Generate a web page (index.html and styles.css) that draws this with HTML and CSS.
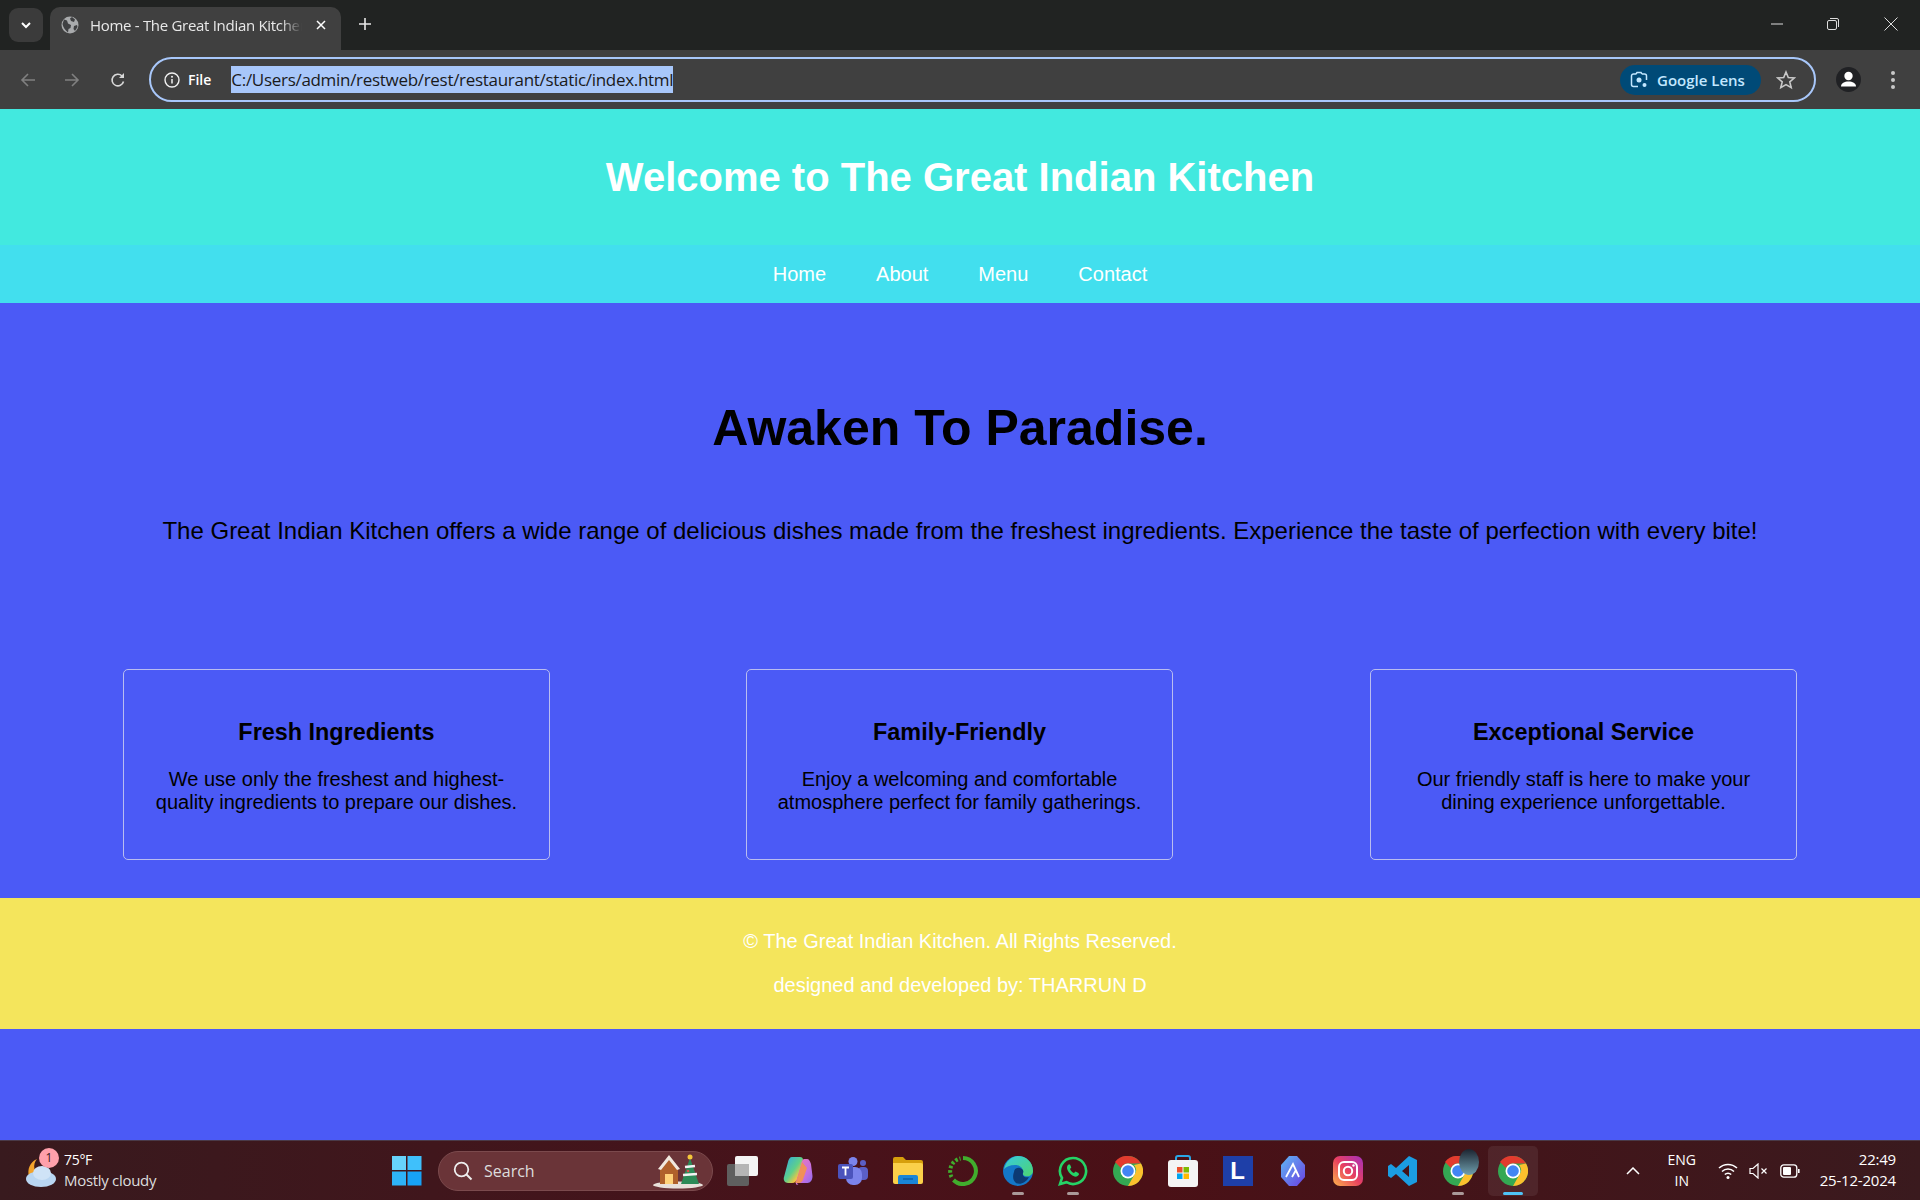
FILE: index.html
```html
<!DOCTYPE html>
<html lang="en">
<head>
  <meta charset="UTF-8" />
  <title>Home - The Great Indian Kitchen</title>
  <link rel="stylesheet" href="styles.css">
</head>
<body>
  <!-- Browser tabs -->
  <div class="tabstrip">
    <div class="tab-search">
      <svg width="12" height="12" viewBox="0 0 12 12"><path d="M2 4l4 4 4-4" fill="none" stroke="#fff" stroke-width="2"/></svg>
    </div>
    <div class="tab">
      <svg class="tab-globe" width="18" height="18" viewBox="0 0 18 18"><circle cx="9" cy="9" r="8.5" fill="#a9abad"/><path d="M3 3.500l3 1 1 3 3 1.500-.5 3-2 1-.5 3.500C4 14 2 11 1.500 8z M11 1l3 2.500-1 2.500-3-1-1-2.500z M13 10l3-1 .5 2-2.500 4-1.500-2z" fill="#3f4042"/></svg>
      <span class="tab-title">Home - The Great Indian Kitchen</span>
      <svg class="tab-close" width="10" height="10" viewBox="0 0 10 10"><path d="M1 1l8 8M9 1L1 9" stroke="#fff" stroke-width="1.500"/></svg>
    </div>
    <svg class="new-tab" width="14" height="14" viewBox="0 0 14 14"><path d="M7 1v12M1 7h12" stroke="#e8e8e8" stroke-width="1.600"/></svg>
    <div class="window-controls">
      <svg width="14" height="14" viewBox="0 0 14 14"><path d="M1 7h12" stroke="#ddd"/></svg>
      <svg width="14" height="14" viewBox="0 0 14 14"><rect x="1.500" y="3.500" width="9" height="9" rx="1.500" fill="none" stroke="#ddd"/><path d="M4 1.500h7a1.500 1.500 0 0 1 1.500 1.500v7" fill="none" stroke="#ddd"/></svg>
      <svg width="14" height="14" viewBox="0 0 14 14"><path d="M.5.5l13 13M13.500.5l-13 13" stroke="#ddd"/></svg>
    </div>
  </div>

  <!-- Address bar -->
  <div class="toolbar">
    <svg class="nav-btn" width="16" height="16" viewBox="0 0 16 16"><path d="M15 8H2M8 2L2 8l6 6" fill="none" stroke="#808080" stroke-width="1.600"/></svg>
    <svg class="nav-btn" width="16" height="16" viewBox="0 0 16 16"><path d="M1 8h13M8 2l6 6-6 6" fill="none" stroke="#808080" stroke-width="1.600"/></svg>
    <svg class="nav-btn" width="16" height="16" viewBox="0 0 16 16"><path d="M13.500 9.500A5.800 5.800 0 1 1 12 4" fill="none" stroke="#d8d8d8" stroke-width="1.600"/><path d="M14 1v5H9z" fill="#d8d8d8"/></svg>
    <div class="omnibox">
      <svg width="16" height="16" viewBox="0 0 16 16"><circle cx="8" cy="8" r="7" fill="none" stroke="#f0f0f0" stroke-width="1.400"/><path d="M8 7v4.500" stroke="#f0f0f0" stroke-width="1.500"/><circle cx="8" cy="4.800" r="1" fill="#f0f0f0"/></svg>
      <span class="chip-file">File</span>
      <span class="url">C:/Users/admin/restweb/rest/restaurant/static/index.html</span>
      <div class="lens">
        <svg width="18" height="18" viewBox="0 0 18 18"><path d="M6 3H3.500A2 2 0 0 0 1.500 5v8.500a2 2 0 0 0 2 2H8M12 3h2.500a2 2 0 0 1 2 2v4M6 3l1-1.500h4L12 3" fill="none" stroke="#c2e7ff" stroke-width="1.500"/><circle cx="9" cy="9" r="2.500" fill="#c2e7ff"/><circle cx="14.500" cy="14" r="2" fill="#c2e7ff"/></svg>
        <span>Google Lens</span>
      </div>
      <svg class="star" width="20" height="20" viewBox="0 0 20 20"><path d="M10 2l2.300 5.500 6 .5-4.500 3.900 1.400 5.800L10 14.600l-5.200 3.100 1.400-5.800L1.700 8l6-.5z" fill="none" stroke="#c8c8c8" stroke-width="1.600"/></svg>
    </div>
    <svg class="avatar" width="25" height="25" viewBox="0 0 25 25"><circle cx="12.500" cy="12.500" r="12.500" fill="#202124"/><circle cx="12.500" cy="9" r="4.200" fill="#fff"/><path d="M5 19.500c0-3.500 3.500-5 7.500-5s7.500 1.500 7.500 5z" fill="#fff"/></svg>
    <svg class="menu-dots" width="4" height="18" viewBox="0 0 4 18"><circle cx="2" cy="2" r="2" fill="#c8c8c8"/><circle cx="2" cy="9" r="2" fill="#c8c8c8"/><circle cx="2" cy="16" r="2" fill="#c8c8c8"/></svg>
  </div>

  <!-- The page itself -->
  <div class="site">
    <header class="site-header">
      <h1>Welcome to The Great Indian Kitchen</h1>
    </header>
    <nav class="site-nav">
      <a href="#">Home</a>
      <a href="#">About</a>
      <a href="#">Menu</a>
      <a href="#">Contact</a>
    </nav>
    <section class="hero">
      <h2>Awaken To Paradise.</h2>
      <p>The Great Indian Kitchen offers a wide range of delicious dishes made from the freshest ingredients. Experience the taste of perfection with every bite!</p>
    </section>
    <section class="features">
      <div class="feature">
        <h3>Fresh Ingredients</h3>
        <p>We use only the freshest and highest-quality ingredients to prepare our dishes.</p>
      </div>
      <div class="feature">
        <h3>Family-Friendly</h3>
        <p>Enjoy a welcoming and comfortable atmosphere perfect for family gatherings.</p>
      </div>
      <div class="feature">
        <h3>Exceptional Service</h3>
        <p>Our friendly staff is here to make your dining experience unforgettable.</p>
      </div>
    </section>
    <footer class="site-footer">
      <p>&copy; The Great Indian Kitchen. All Rights Reserved.</p>
      <p>designed and developed by: THARRUN D</p>
    </footer>
  </div>

  <!-- Windows taskbar -->
  <div class="taskbar">
    <div class="weather">
      <svg width="34" height="36" viewBox="0 0 34 36"><path d="M13 6a11 11 0 0 0 3 17L5 24C3 16 6 9 13 6z" fill="#f3a32b"/><ellipse cx="17" cy="26" rx="15" ry="8" fill="#b9d6f2"/><ellipse cx="18" cy="20" rx="9" ry="7" fill="#cfe3f7"/></svg>
      <span class="weather-badge">1</span>
      <div class="weather-text">
        <div class="weather-temp">75&deg;F</div>
        <div>Mostly cloudy</div>
      </div>
    </div>
    <svg class="start" width="30" height="30" viewBox="0 0 30 30"><rect width="14" height="14" fill="#67d3fb"/><rect x="15.500" width="14" height="14" fill="#3fc0fb"/><rect y="15.500" width="14" height="14" fill="#2eb3f8"/><rect x="15.500" y="15.500" width="14" height="14" fill="#17a2f6"/></svg>
    <div class="search-pill">
      <svg width="22" height="22" viewBox="0 0 22 22"><circle cx="9.500" cy="9.500" r="6.800" fill="none" stroke="#eee" stroke-width="1.800"/><path d="M14.500 14.500l5 5" stroke="#eee" stroke-width="2"/></svg>
      <span>Search</span>
      <svg class="search-art" width="52" height="36" viewBox="0 0 52 36"><ellipse cx="26" cy="32" rx="25" ry="3.500" fill="#e8e0da"/><path d="M8 15L17 3l9 12v16H8z" fill="#b0612b"/><path d="M6 16L17 2l11 14-3 1L17 7 9 17z" fill="#f1e9df"/><rect x="13" y="21" width="8" height="10" fill="#ffd27a"/><path d="M38 5l9 26H29z" fill="#2c8a57"/><path d="M33 14l10-1M31 22l14-1" stroke="#f3f3f3" stroke-width="2.500"/><circle cx="38" cy="4" r="2.500" fill="#f5c73a"/><circle cx="36" cy="18" r="1.300" fill="#e24a4a"/></svg>
    </div>
    <div class="pinned">
      <div class="pin"><svg width="32" height="30" viewBox="0 0 32 30"><rect x="0" y="8" width="22" height="22" rx="2" fill="#5f5f5f"/><rect x="8" y="0" width="23" height="20" rx="2" fill="#f4f4f4"/><rect x="8" y="8" width="14" height="12" fill="#b5b5b5"/></svg></div>
      <div class="pin"><svg width="30" height="30" viewBox="0 0 30 30"><defs><linearGradient id="cop-a" x1="0" y1="0" x2="1" y2="1"><stop offset="0" stop-color="#2fa8e8"/><stop offset=".5" stop-color="#5fd08a"/><stop offset=".75" stop-color="#f5c542"/><stop offset="1" stop-color="#f0656a"/></linearGradient><linearGradient id="cop-b" x1="0" y1="0" x2="1" y2="1"><stop offset="0" stop-color="#f07ab0"/><stop offset=".6" stop-color="#c56fe0"/><stop offset="1" stop-color="#8a6cf0"/></linearGradient></defs><path d="M9 1h8c2 0 3 1 3 3l-5 17c-1 4-3 6-6 6H5c-3 0-5-3-4-6L5 6c.6-3 2-5 4-5z" fill="url(#cop-a)"/><path d="M21 3h3c2 0 3 2 4 5l1.500 12c0 4-2 7-5 7h-9c-2 0-2 1 0 2h-1c-2 0-2-3-1-5l4-13c.6-4 2-8 3.500-8z" fill="url(#cop-b)"/><path d="M19 6l-5 17c-.5 2-1 3-2 4h5c2-1 3-3 3.500-5L24 12z" fill="#f0905a"/></svg></div>
      <div class="pin"><svg width="30" height="28" viewBox="0 0 30 28"><circle cx="25" cy="6" r="3" fill="#5b5fc7"/><rect x="20" y="10" width="10" height="13" rx="4" fill="#5b5fc7"/><circle cx="15" cy="4.500" r="4.500" fill="#7b83eb"/><rect x="8" y="10" width="16" height="18" rx="7" fill="#7b83eb"/><rect x="0" y="7" width="15" height="15" rx="2" fill="#4b53bc"/><path d="M4 10.500h7M7.500 10.500v8" stroke="#fff" stroke-width="1.800"/></svg></div>
      <div class="pin"><svg width="30" height="27" viewBox="0 0 30 27"><path d="M0 2a2 2 0 0 1 2-2h8l3 3h15a2 2 0 0 1 2 2v4H0z" fill="#d79f0c"/><path d="M0 6h28a2 2 0 0 1 2 2v17a2 2 0 0 1-2 2H2a2 2 0 0 1-2-2z" fill="#fbd04a"/><path d="M5 20a2 2 0 0 1 2-2h16a2 2 0 0 1 2 2v7H5z" fill="#1a86d8"/><path d="M10 22h10" stroke="#0e5fa8" stroke-width="1.500"/></svg></div>
      <div class="pin"><svg width="30" height="30" viewBox="0 0 30 30"><path d="M15 2a13 13 0 1 1-9.500 22" fill="none" stroke="#41ad2d" stroke-width="4"/><path d="M3.500 21a13 13 0 0 1 9-18.500" fill="none" stroke="#41ad2d" stroke-width="4" stroke-dasharray="2.500 2"/></svg></div>
      <div class="pin pin-open"><svg width="30" height="30" viewBox="0 0 30 30"><defs><linearGradient id="edge" x1="0" y1="0" x2="1" y2="1"><stop offset="0" stop-color="#38c9e0"/><stop offset="1" stop-color="#4ed56f"/></linearGradient></defs><circle cx="15" cy="15" r="15" fill="#1477c8"/><path d="M1 13C3 5 9 0 15 0c8 0 15 6 15 15 0 4-4 6-8 5-3-1-2-3-2-4 0-5-4-7-8-7-5 0-9 2-11 4z" fill="url(#edge)"/><path d="M11 16c0-3 3-5 6-4 3 1 4 3 3 5-1 3 2 5 6 4-3 6-9 8-13 6-4-3-3-8-2-11z" fill="#0c3a73"/></svg></div>
      <div class="pin pin-open"><svg width="30" height="30" viewBox="0 0 30 30"><path d="M15 2a13 13 0 0 0-11 20L2 28l6.500-1.800A13 13 0 1 0 15 2z" fill="none" stroke="#25d366" stroke-width="2.600"/><path d="M10.500 8.500c-1.500 1-2 3-1 5.500 1.500 3 4 5.500 7 6.500 2 .5 3.700-.5 4.500-2l-.5-1.500-3-1.500-1.500 1.500c-1.500-.5-3.500-2.500-4-4l1.300-1.500-1.300-3z" fill="#25d366"/></svg></div>
      <div class="pin"><svg width="30" height="30" viewBox="0 0 30 30"><use href="#chrome-logo"/></svg></div>
      <div class="pin"><svg width="30" height="32" viewBox="0 0 30 32"><path d="M8 6V3a2 2 0 0 1 2-2h10a2 2 0 0 1 2 2v3" fill="none" stroke="#2aa7e6" stroke-width="2"/><rect x="0" y="5" width="30" height="27" rx="3" fill="#f4f4f4"/><rect x="9" y="12" width="5.500" height="5.500" fill="#ea4f2b"/><rect x="15.500" y="12" width="5.500" height="5.500" fill="#7fba00"/><rect x="9" y="18.500" width="5.500" height="5.500" fill="#00a4ef"/><rect x="15.500" y="18.500" width="5.500" height="5.500" fill="#ffb900"/></svg></div>
      <div class="pin"><span class="pin-l">L</span></div>
      <div class="pin"><svg width="28" height="32" viewBox="0 0 28 32"><defs><linearGradient id="aero" x1="0" y1="0" x2="1" y2="1"><stop offset="0" stop-color="#5fb8f5"/><stop offset="1" stop-color="#6a3fe0"/></linearGradient></defs><path d="M10 1h8l8 9v12l-8 9h-8L2 22V10z" fill="url(#aero)"/><path d="M7 22L14 9l6 13M13 22l4-7" fill="none" stroke="#fff" stroke-width="1.800"/></svg></div>
      <div class="pin"><svg width="30" height="30" viewBox="0 0 30 30"><defs><linearGradient id="insta" x1="0" y1="1" x2="1" y2="0"><stop offset="0" stop-color="#fdb44b"/><stop offset=".5" stop-color="#e8405f"/><stop offset="1" stop-color="#a42fc0"/></linearGradient></defs><rect width="30" height="30" rx="7" fill="url(#insta)"/><rect x="6" y="6" width="18" height="18" rx="5" fill="none" stroke="#fff" stroke-width="2"/><circle cx="15" cy="15" r="4.200" fill="none" stroke="#fff" stroke-width="2"/><circle cx="20.500" cy="9.500" r="1.200" fill="#fff"/></svg></div>
      <div class="pin"><svg width="30" height="30" viewBox="0 0 30 30"><path d="M21 0l8 4v22l-8 4-13-12-5 4-3-2V10l3-2 5 4zM21 9l-7 6 7 6z" fill="#1b9de2"/></svg></div>
      <div class="pin pin-open"><svg width="30" height="30" viewBox="0 0 30 30"><use href="#chrome-logo"/></svg><span class="profile-thumb"></span></div>
      <div class="pin pin-active"><svg width="30" height="30" viewBox="0 0 30 30"><g id="chrome-logo"><circle cx="15" cy="15" r="15" fill="#34a853"/><path d="M15 0a15 15 0 0 1 13 7.500H15a7.500 7.500 0 0 0-7 4.500L2 6a15 15 0 0 1 13-6z" fill="#e33b2e"/><path d="M28 7.500A15 15 0 0 1 15 30l6.500-11.500A7.500 7.500 0 0 0 21 9z" fill="#fbc02d"/><circle cx="15" cy="15" r="7.500" fill="#fff"/><circle cx="15" cy="15" r="5.800" fill="#4285f4"/></g></svg></div>
    </div>
    <div class="tray">
      <svg class="tray-chevron" width="14" height="8" viewBox="0 0 14 8"><path d="M1 7l6-6 6 6" fill="none" stroke="#fff" stroke-width="1.500"/></svg>
      <div class="lang">ENG<br>IN</div>
      <svg class="tray-icon" width="20" height="18" viewBox="0 0 20 18"><path d="M1 6a13 13 0 0 1 18 0M4 9.500a8.500 8.500 0 0 1 12 0M6.800 12.500a4.500 4.500 0 0 1 6.400 0" fill="none" stroke="#fff" stroke-width="1.500"/><circle cx="10" cy="15.500" r="1.500" fill="#fff"/></svg>
      <svg class="tray-icon" width="20" height="16" viewBox="0 0 20 16"><path d="M1 5.500h3L9 1v14l-5-4.500H1z" fill="none" stroke="#fff" stroke-width="1.200"/><path d="M12.500 5.500l5 5M17.500 5.500l-5 5" stroke="#fff" stroke-width="1.200"/></svg>
      <svg class="tray-icon" width="20" height="14" viewBox="0 0 20 14"><rect x=".8" y=".8" width="16" height="12.400" rx="3" fill="none" stroke="#fff" stroke-width="1.300"/><rect x="3" y="3" width="8" height="8" rx="1" fill="#fff"/><rect x="18" y="5" width="1.600" height="4" fill="#fff"/></svg>
      <div class="clock"><div>22:49</div><div>25-12-2024</div></div>
    </div>
  </div>
</body>
</html>
```

FILE: styles.css
```css
:root {
  --ui-font: "Open Sans", "Noto Sans", sans-serif;
  --strip-bg: #212322;
  --toolbar-bg: #404040;
}

* {
  box-sizing: border-box;
}

body {
  font-family: "Liberation Sans", Arial, sans-serif;
  margin: 0;
  width: 1920px;
  height: 1200px;
  overflow: hidden;
  display: flex;
  flex-direction: column;
  background-color: #4b5af6;
}

/* Browser tabs */
.tabstrip {
  height: 50px;
  flex: none;
  display: flex;
  align-items: flex-start;
  background: var(--strip-bg);
  padding: 7px 0 0 9px;
  color: #e8e8e8;
  font-family: var(--ui-font);
}

.tab-search {
  width: 34px;
  height: 34px;
  margin-top: 1px;
  border-radius: 9px;
  background: #3b3b3b;
  display: flex;
  align-items: center;
  justify-content: center;
}

.tab {
  width: 291px;
  height: 43px;
  margin-left: 7px;
  border-radius: 10px 10px 0 0;
  background: var(--toolbar-bg);
  display: flex;
  align-items: center;
  padding: 0 15px 7px 11px;
}

.tab-globe {
  flex: none;
}

.tab-title {
  flex: 1;
  margin-left: 11px;
  font-size: 15px;
  letter-spacing: -0.3px;
  white-space: nowrap;
  overflow: hidden;
  -webkit-mask-image: linear-gradient(to right, #000 90%, transparent 100%);
  mask-image: linear-gradient(to right, #000 90%, transparent 100%);
}

.tab-close {
  flex: none;
  margin-left: 14px;
}

.new-tab {
  margin: 10px 0 0 17px;
}

.window-controls {
  margin-left: auto;
  display: flex;
  gap: 42px;
  padding: 10px 22px 0 0;
}

.window-controls svg:last-child {
  margin-left: 2px;
}

/* Address bar */
.toolbar {
  height: 59px;
  flex: none;
  display: flex;
  align-items: center;
  background: var(--toolbar-bg);
  padding-left: 20px;
}

.nav-btn {
  margin-right: 28px;
}

.nav-btn:nth-child(2) {
  margin-right: 30px;
}

.nav-btn:nth-child(3) {
  margin-right: 23px;
}

.omnibox {
  width: 1667px;
  height: 45px;
  border: 2px solid #a8c7fa;
  border-radius: 23px;
  display: flex;
  align-items: center;
  padding-left: 13px;
  color: #e8e8e8;
  font-family: var(--ui-font);
}

.chip-file {
  margin-left: 8px;
  font-size: 14px;
  font-weight: 600;
  color: #fff;
}

.url {
  margin-left: 20px;
  background: #a8c7fa;
  color: #1a1a1a;
  font-size: 17px;
  letter-spacing: -0.3px;
  line-height: 27px;
  white-space: nowrap;
}

.lens {
  margin-left: auto;
  width: 141px;
  height: 30px;
  border-radius: 15px;
  background: #004a77;
  color: #c2e7ff;
  display: flex;
  align-items: center;
  gap: 9px;
  padding-left: 10px;
  font-size: 15px;
  font-weight: 600;
}

.star {
  margin: 0 18px 0 15px;
}

.avatar {
  margin-left: 20px;
}

.menu-dots {
  margin-left: 30px;
}

/* The page itself */
.site {
  flex: 1;
  background-color: #4b5af6;
}

.site-header {
  height: 136px;
  background: #42e9df;
  display: flex;
  align-items: center;
  justify-content: center;
  color: #fff;
}

.site-header h1 {
  margin: 0;
  font-size: 40px;
  line-height: 46px;
}

.site-nav {
  height: 58px;
  background: #42dfee;
  display: flex;
  justify-content: center;
  align-items: center;
  gap: 50px;
}

.site-nav a {
  color: #fff;
  text-decoration: none;
  font-size: 20px;
}

.hero {
  padding-top: 96px;
  text-align: center;
  color: #000;
}

.hero h2 {
  margin: 0;
  font-size: 50px;
  line-height: 58px;
}

.hero p {
  margin: 60px 0 0;
  font-size: 24px;
  line-height: 28px;
}

.features {
  display: flex;
  gap: 196px;
  padding: 0 123px;
  margin-top: 124px;
}

.feature {
  width: 427px;
  height: 191px;
  flex: none;
  border: 1px solid #b9bdf0;
  border-radius: 5px;
  padding: 49px 30px 0;
  text-align: center;
  color: #000;
}

.feature:last-child {
  margin-left: auto;
}

.feature h3 {
  margin: 0;
  font-size: 23.4px;
  line-height: 27px;
}

.feature p {
  margin: 22px 0 0;
  font-size: 20px;
  line-height: 23px;
}

.site-footer {
  margin-top: 38px;
  height: 131px;
  background: #f4e55c;
  color: #fff;
  text-align: center;
  font-size: 20px;
  line-height: 23px;
  padding-top: 32px;
}

.site-footer p {
  margin: 0 0 21px;
}

/* Windows taskbar */
.taskbar {
  height: 60px;
  flex: none;
  display: flex;
  align-items: center;
  border-top: 1px solid #4a3a48;
  background: linear-gradient(to right, #381a1e 0%, #48121a 45%, #4a1016 60%, #3a1a1e 100%);
  color: #fff;
  font-family: var(--ui-font);
}

.weather {
  position: relative;
  width: 392px;
  display: flex;
  align-items: center;
  padding-left: 24px;
}

.weather-badge {
  position: absolute;
  left: 39px;
  top: -4px;
  width: 20px;
  height: 20px;
  border-radius: 50%;
  background: #ffa0ab;
  color: #3a1a1e;
  font-size: 12px;
  text-align: center;
  line-height: 20px;
}

.weather-text {
  margin-left: 6px;
  margin-top: -2px;
  font-size: 15px;
  line-height: 20px;
  letter-spacing: -0.3px;
  color: #ddd;
}

.weather-temp {
  color: #fff;
  font-size: 14px;
}

.start {
  flex: none;
}

.search-pill {
  flex: none;
  width: 275px;
  height: 40px;
  margin-left: 16px;
  border-radius: 20px;
  background: #6a3438;
  border: 1px solid #7b4a4d;
  display: flex;
  align-items: center;
  padding-left: 13px;
  color: #ddd;
  font-size: 16px;
}

.search-pill span {
  margin-left: 10px;
}

.search-art {
  margin-left: auto;
  margin-right: 8px;
}

.pinned {
  margin-left: 2px;
  display: flex;
}

.pin {
  position: relative;
  width: 55px;
  height: 50px;
  display: flex;
  align-items: center;
  justify-content: center;
}

.pin-open::after,
.pin-active::after {
  content: "";
  position: absolute;
  bottom: 1px;
  left: 50%;
  width: 12px;
  height: 3px;
  margin-left: -6px;
  border-radius: 2px;
  background: #a99;
}

.pin-active {
  width: 50px;
  margin-left: 3px;
  background: rgba(255, 255, 255, 0.07);
  border-radius: 5px;
}

.pin-active::after {
  width: 20px;
  margin-left: -10px;
  background: #4fc3f7;
}

.pin-l {
  width: 30px;
  height: 30px;
  background: #1e3fa8;
  color: #fff;
  font-family: "Liberation Sans", sans-serif;
  font-weight: 700;
  font-size: 24px;
  line-height: 30px;
  text-align: center;
}

.profile-thumb {
  position: absolute;
  top: 3px;
  right: 6px;
  width: 20px;
  height: 26px;
  border-radius: 50%;
  background: linear-gradient(#1c2430, #6f9fae);
}

.tray {
  margin-left: auto;
  display: flex;
  align-items: center;
  padding-right: 24px;
}

.lang {
  margin-left: 20px;
  width: 44px;
  margin-top: -2px;
  text-align: center;
  font-size: 14px;
  line-height: 21px;
}

.tray-icon {
  margin-left: 11px;
}

.lang + .tray-icon {
  margin-left: 14px;
}

.clock {
  margin-left: 20px;
  margin-top: -2px;
  text-align: right;
  font-size: 15px;
  line-height: 21px;
  letter-spacing: -0.2px;
}
```
